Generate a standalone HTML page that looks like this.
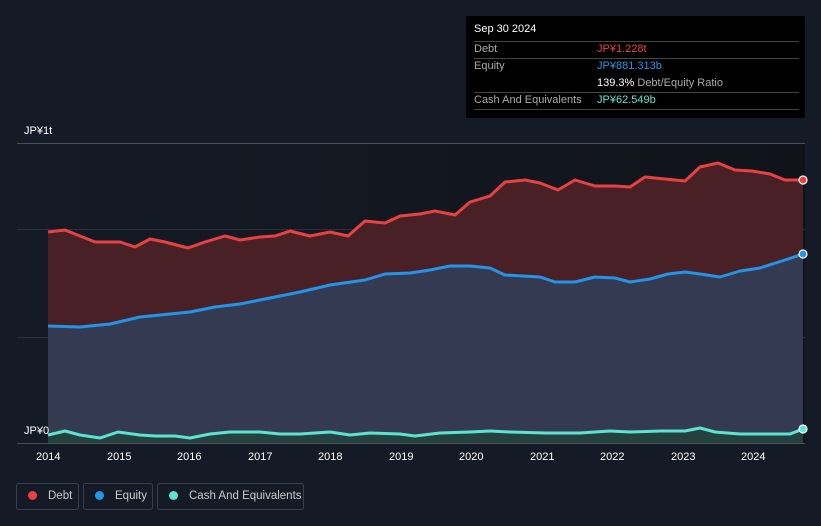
<!DOCTYPE html>
<html><head><meta charset="utf-8"><style>
body{margin:0;width:821px;height:526px;background:#151b26;font-family:"Liberation Sans","Noto Sans CJK JP",sans-serif;overflow:hidden;position:relative}
.tt{position:absolute;left:466px;top:16px;width:339px;height:102px;background:#000;border-radius:2px;color:#fff;font-size:11px}
.tt .r{position:absolute;left:8px;right:6px;border-bottom:1px solid #444;height:17px;line-height:17px;color:#aaa;white-space:nowrap}
.tt .v{position:absolute;left:123px}
.lg{position:absolute;top:483px;height:27px;border:1px solid #3b414c;border-radius:3px;color:#ccc;font-size:11.5px;line-height:25px;box-sizing:border-box;white-space:nowrap}
.dot{display:inline-block;width:9px;height:9px;border-radius:50%;margin:0 11px 0 11px;vertical-align:-1px}
.ax{position:absolute;color:#fff;font-size:11px}
</style></head><body>
<svg width="821" height="526" style="position:absolute;left:0;top:0">
<defs><linearGradient id="bg" x1="0" y1="0" x2="1" y2="0"><stop offset="0" stop-color="#151b26"/><stop offset="1" stop-color="#10131a"/></linearGradient></defs>
<rect x="17" y="143" width="788" height="300" fill="url(#bg)"/>
<line x1="17" y1="143.5" x2="805" y2="143.5" stroke="#4a4f58"/>
<line x1="17" y1="229.5" x2="805" y2="229.5" stroke="#2a2f38"/>
<line x1="17" y1="337.5" x2="805" y2="337.5" stroke="#2a2f38"/>
<path d="M48,232 L65,230 80,236 95,242 120,242 135,247 150,239 165,242 188,248 205,242 225,236 240,240 260,237 275,236 290,231 310,236 330,232 348,236 365,221 385,223 400,216 420,214 435,211 455,215 470,202 490,196 505,182 525,180 540,183 558,190 575,180 595,186 615,186 630,187 645,177 665,179 685,181 700,167 718,163 735,170 752,171 770,174 785,180 803,180 L803,443 L48,443Z" fill="#4a2027"/>
<path d="M48,326 L80,327 110,324 140,317 170,314 190,312 215,307 240,304 270,298 300,292 330,285 365,280 385,274 410,273 430,270 450,266 470,266 490,268 505,275 540,277 555,282 575,282 595,277 615,278 630,282 650,279 668,274 685,272 700,274 720,277 740,271 760,268 785,260 803,254 L803,443 L48,443Z" fill="#333a52"/>
<path d="M48,435 L65,431 80,435 100,438 118,432 140,435 155,436 175,436 190,438 210,434 230,432 260,432 280,434 300,434 330,432 350,435 370,433 400,434 415,436 440,433 470,432 490,431 510,432 545,433 580,433 610,431 630,432 660,431 685,431 700,428 715,432 740,434 770,434 790,434 803,429 L803,443 L48,443Z" fill="#24413f"/>
<path d="M48,232 L65,230 80,236 95,242 120,242 135,247 150,239 165,242 188,248 205,242 225,236 240,240 260,237 275,236 290,231 310,236 330,232 348,236 365,221 385,223 400,216 420,214 435,211 455,215 470,202 490,196 505,182 525,180 540,183 558,190 575,180 595,186 615,186 630,187 645,177 665,179 685,181 700,167 718,163 735,170 752,171 770,174 785,180 803,180" fill="none" stroke="#e84142" stroke-width="3" stroke-linejoin="round"/>
<path d="M48,326 L80,327 110,324 140,317 170,314 190,312 215,307 240,304 270,298 300,292 330,285 365,280 385,274 410,273 430,270 450,266 470,266 490,268 505,275 540,277 555,282 575,282 595,277 615,278 630,282 650,279 668,274 685,272 700,274 720,277 740,271 760,268 785,260 803,254" fill="none" stroke="#2394e6" stroke-width="3" stroke-linejoin="round"/>
<path d="M48,435 L65,431 80,435 100,438 118,432 140,435 155,436 175,436 190,438 210,434 230,432 260,432 280,434 300,434 330,432 350,435 370,433 400,434 415,436 440,433 470,432 490,431 510,432 545,433 580,433 610,431 630,432 660,431 685,431 700,428 715,432 740,434 770,434 790,434 803,429" fill="none" stroke="#5ee3cf" stroke-width="3" stroke-linejoin="round"/>
<line x1="17" y1="443.5" x2="805" y2="443.5" stroke="#4a4f58"/>
<circle cx="803" cy="180" r="4" fill="#e84142" stroke="#fff" stroke-width="1.2"/>
<circle cx="803" cy="254" r="4" fill="#2394e6" stroke="#fff" stroke-width="1.2"/>
<circle cx="803" cy="429" r="4" fill="#5ee3cf" stroke="#fff" stroke-width="1.2"/>
</svg>
<div class="ax" style="left:24px;top:125px">JP¥1t</div>
<div class="ax" style="left:24px;top:425px">JP¥0</div>
<div class="ax" style="left:36px;top:451px">2014</div>
<div class="ax" style="left:107px;top:451px">2015</div>
<div class="ax" style="left:177px;top:451px">2016</div>
<div class="ax" style="left:248px;top:451px">2017</div>
<div class="ax" style="left:318px;top:451px">2018</div>
<div class="ax" style="left:389px;top:451px">2019</div>
<div class="ax" style="left:459px;top:451px">2020</div>
<div class="ax" style="left:530px;top:451px">2021</div>
<div class="ax" style="left:600px;top:451px">2022</div>
<div class="ax" style="left:671px;top:451px">2023</div>
<div class="ax" style="left:741px;top:451px">2024</div>
<div class="tt">
<div style="position:absolute;left:8px;right:6px;top:7px;height:18px;color:#fff;border-bottom:1px solid #444">Sep 30 2024</div>
<div class="r" style="top:25px">Debt<span class="v" style="color:#e84142">JP¥1.228t</span></div>
<div class="r" style="top:42px;border:none">Equity<span class="v" style="color:#2394e6">JP¥881.313b</span></div>
<div class="r" style="top:59px"><span class="v"><b style="color:#fff;font-weight:normal">139.3%</b> Debt/Equity Ratio</span></div>
<div class="r" style="top:76px">Cash And Equivalents<span class="v" style="color:#5ee3cf">JP¥62.549b</span></div>
</div>
<div class="lg" style="left:16px;width:63px"><span class="dot" style="background:#e84142"></span>Debt</div>
<div class="lg" style="left:83px;width:70px"><span class="dot" style="background:#2394e6"></span>Equity</div>
<div class="lg" style="left:157px;width:147px"><span class="dot" style="background:#5ee3cf"></span>Cash And Equivalents</div>
</body></html>
